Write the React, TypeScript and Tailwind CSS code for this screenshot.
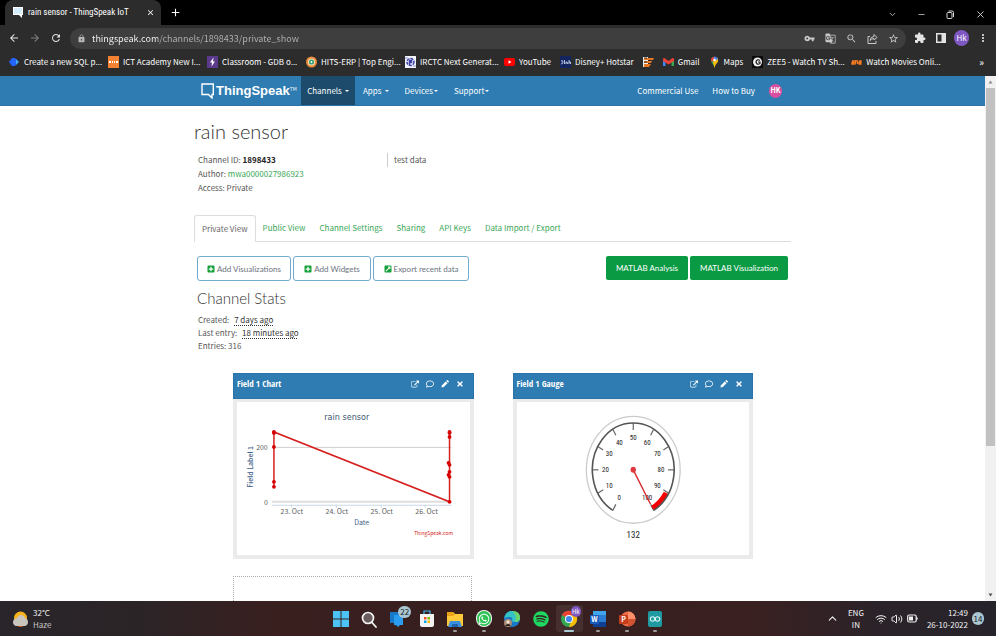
import React from "react";
import {
  MdVpnKey, MdGTranslate, MdZoomOut, MdStarBorder, MdExtension, MdMoreVert, MdLock, MdArrowBack,
  MdArrowForward, MdRefresh, MdAdd, MdClose,
} from "react-icons/md";
import { FaRegComment, FaPencilAlt, FaTimes, FaPlusSquare, FaExternalLinkSquareAlt, FaWhatsapp, FaSpotify } from "react-icons/fa";
import { ChevronDown, ChevronUp, Minus, Wifi, Volume2, X } from "lucide-react";

/* ---------- browser chrome ---------- */

function TabStrip() {
  return (
    <div className="flex h-[25px] items-end bg-black pl-[5px] text-white">
      <div className="flex h-[25px] w-[156px] items-center rounded-t-lg bg-[#2c2c2c] pr-[6px] pl-[8px]">
        <svg viewBox="0 0 10 11" className="h-[11px] w-[10px]" aria-hidden="true">
          <path d="M0 0h10v8H9v3L6 8H0z" fill="#fff" />
          <path d="M1 1h8v6H1z" fill="#d5ecfa" />
        </svg>
        <span className="ml-[5px] flex-1 font-['Roboto_Condensed','Noto_Sans_CJK_SC',sans-serif] text-[9px] whitespace-nowrap">rain sensor - ThingSpeak IoT</span>
        <button aria-label="Close tab" className="text-[9px]"><MdClose /></button>
      </div>
      <button aria-label="New tab" className="mb-[6px] ml-[8px] text-[13px]"><MdAdd /></button>
      <div className="ml-auto flex h-[22px] items-center gap-[20px] pr-[10px] text-[#d6d6d6]">
        <button aria-label="Search tabs"><ChevronDown size={9} strokeWidth={2} /></button>
        <button aria-label="Minimize"><Minus size={9} strokeWidth={2} /></button>
        <button aria-label="Restore">
          <svg viewBox="0 0 9 9" className="h-[9px] w-[9px]" fill="none" stroke="currentColor">
            <rect x="1" y="2.500" width="5" height="6" rx="1" />
            <path d="M2.500 1H6q1.500 0 1.500 1.500V7" />
          </svg>
        </button>
        <button aria-label="Close window"><X size={11} strokeWidth={2} /></button>
      </div>
    </div>
  );
}

function Toolbar() {
  return (
    <div className="flex h-[26px] items-center bg-[#2c2c2c] text-[12px] text-[#e3e3e3]">
      <div className="flex w-[70px] items-center gap-[9px] pl-[8px]">
        <button aria-label="Back"><MdArrowBack /></button>
        <button aria-label="Forward" className="text-[#808080]"><MdArrowForward /></button>
        <button aria-label="Reload"><MdRefresh /></button>
      </div>
      <div className="flex h-[21px] flex-1 items-center rounded-full bg-[#3e3e3e] pr-[2px] pl-[7px]">
        <MdLock className="text-[9px] text-[#b5b5b5]" />
        <input
          aria-label="Address"
          readOnly
          value="thingspeak.com/channels/1898433/private_show"
          className="ml-[6px] h-[18px] min-w-0 flex-1 bg-[linear-gradient(90deg,#ffffff_66px,#b4b4b4_66px)] bg-clip-text text-[9px] text-transparent outline-none"
        />
        <div className="grid grid-cols-[repeat(5,21px)] place-items-center text-[11px] text-[#c8c8c8]">
          <button aria-label="Passwords"><MdVpnKey /></button>
          <button aria-label="Translate"><MdGTranslate /></button>
          <button aria-label="Zoom"><MdZoomOut /></button>
          <button aria-label="Share">
            <svg viewBox="0 0 11 11" className="h-[11px] w-[11px]" fill="none" stroke="currentColor">
              <path d="M3 3.500H1v7h8V8" />
              <path d="M3 7.500Q3.500 3.500 7 3.500V1.500L10 4.500L7 7V5.500Q4.500 5.500 3 7.500z" />
            </svg>
          </button>
          <button aria-label="Bookmark"><MdStarBorder /></button>
        </div>
      </div>
      <div className="grid grid-cols-[repeat(4,21px)] place-items-center px-[3px]">
        <button aria-label="Extensions"><MdExtension /></button>
        <button aria-label="Side panel">
          <svg viewBox="0 0 10 10" className="h-[10px] w-[10px]">
            <path d="M0 0h10v10H0zM1.500 1.500v7h4v-7z" fill="currentColor" fillRule="evenodd" />
          </svg>
        </button>
        <button aria-label="Profile" className="flex h-[16px] w-[15px] items-center justify-center rounded-full bg-[#7e57c2] text-[8px] text-white">Hk</button>
        <button aria-label="Menu"><MdMoreVert /></button>
      </div>
    </div>
  );
}

const icon = "h-[12px] w-[11px] shrink-0";

const bookmarks: { label: string; wide: boolean; art: React.ReactNode }[] = [
  { label: "Create a new SQL p...", wide: true, art: <svg viewBox="0 0 11 12" className={icon}><path d="M3 2h3l3 4-3 4H3L0 6z" fill="#2563ff" /><path d="M7 3l3 3-3 3z" fill="#3fa9ff" /></svg> },
  { label: "ICT Academy New I...", wide: true, art: <svg viewBox="0 0 11 12" className={icon}><path d="M0 0h11v12H0z" fill="#f58233" /><path d="M1 5h2v2H1zM4 5h1v2H4zM6 5h1v2H6zM8 5h2v2H8z" fill="#fff" /></svg> },
  { label: "Classroom - GDB o...", wide: true, art: <svg viewBox="0 0 11 12" className={icon}><path d="M0 0h11v12H0z" fill="#5b3a8c" /><path d="M6.500 1.500L3 6.500h2L4.500 10.500L8 5.500H6z" fill="#fff" /></svg> },
  { label: "HITS-ERP | Top Engi...", wide: true, art: <svg viewBox="0 0 11 12" className={icon}><circle cx="5.500" cy="6" r="5.500" fill="#e98b3a" /><circle cx="5.500" cy="6" r="3.500" fill="#f2e2b8" /><circle cx="5.500" cy="6" r="2.500" fill="#2c9a6a" /><circle cx="5.500" cy="6" r="1" fill="#fff" /></svg> },
  { label: "IRCTC Next Generat...", wide: true, art: <svg viewBox="0 0 11 12" className={icon}><path d="M0 0h11v12H0z" fill="#f2f2fb" /><circle cx="5.500" cy="6" r="3.500" fill="none" stroke="#3b3fa5" strokeWidth="1.500" strokeDasharray="3 1" /><path d="M4 4h3v3H5v2H4zM0 2h3M8 10h3" fill="#3b3fa5" stroke="#3b3fa5" strokeWidth=".5" /></svg> },
  { label: "YouTube", wide: false, art: <svg viewBox="0 0 11 12" className={icon}><rect y="2" width="11" height="8" rx="2" fill="#f00" /><path d="M4.500 4.200v3.600L7.500 6z" fill="#fff" /></svg> },
  { label: "Disney+ Hotstar", wide: false, art: <svg viewBox="0 0 11 12" className={icon}><path d="M0 0h11v12H0z" fill="#13245e" /><path d="M1 5q2-1 2 1t-2 2M4.500 4v4M6 8V6q1.500-1 1.500 2M9 4v4M9 6h1.500v2" fill="none" stroke="#dfe8ff" strokeWidth=".8" /></svg> },
  { label: "", wide: false, art: <svg viewBox="0 0 11 12" className={icon}><path d="M0 1h5v10H0z" fill="#eee" /><path d="M1 2h10l-1 2H1zM1 5h8l-1 2H1zM1 8h7l-2 3H1z" fill="#e87722" /><path d="M1 2h3M1 6h3" stroke="#333" /></svg> },
  { label: "Gmail", wide: false, art: <svg viewBox="0 0 11 12" className={icon}><path d="M0 3h2.500v7H0z" fill="#4285f4" /><path d="M8.500 3H11v7H8.500z" fill="#34a853" /><path d="M0 2.500l1.500-.5 4 3 4-3 1.500.5V5L5.500 8.500 0 5z" fill="#ea4335" /></svg> },
  { label: "Maps", wide: false, art: <svg viewBox="0 0 11 12" className={icon}><path d="M5.500 12Q5 9 2.500 6.500Q1 3 4 1l4 4.500Q6 8 5.500 12z" fill="#34a853" /><path d="M5.500 12Q5.500 9 8.500 6.500Q10 3.500 8 1.500L4 6z" fill="#fbbc04" /><path d="M2 4Q2 1 5.500.5L7 2 3 6z" fill="#ea4335" /><path d="M5.500.5Q8 .5 9 3L7 4.500 4.500 2z" fill="#4285f4" /><circle cx="5.500" cy="4" r="1.300" fill="#fff" /></svg> },
  { label: "ZEE5 - Watch TV Sh...", wide: true, art: <svg viewBox="0 0 11 12" className={icon}><path d="M0 0h11v12H0z" fill="#0a0a0a" /><circle cx="5.500" cy="6" r="4.500" fill="#eee" /><path d="M8 4.500Q5 2.500 4 6q1 3.500 4 1.500V6H6" fill="none" stroke="#222" strokeWidth="1.200" /></svg> },
  { label: "Watch Movies Onli...", wide: true, art: <svg viewBox="0 0 11 12" className={icon}><path d="M1 5h2v3H1V6.500h2M4.500 4v4.500M5 5h1.500v3M8 5h2v3H8V6.500h2" fill="none" stroke="#f47a20" strokeWidth="1.300" /></svg> },
];

function BookmarkBar() {
  return (
    <div className="flex h-[25px] items-center bg-[#2c2c2c] pr-[12px] pb-[3px] pl-[9px] text-[8px] text-white">
      {bookmarks.map((b) => (
        <a key={b.label} href="#" aria-label={b.label || "Bookmark"} className={b.wide ? "flex w-[99px] shrink-0 items-center gap-[4px] whitespace-nowrap" : "mr-[9px] flex shrink-0 items-center gap-[4px] whitespace-nowrap"}>
          {b.art}
          {b.label && <span>{b.label}</span>}
        </a>
      ))}
      <button aria-label="More bookmarks" className="ml-auto text-[10px] leading-none">»</button>
    </div>
  );
}

/* ---------- ThingSpeak page ---------- */

function Caret() {
  return <svg viewBox="0 0 4 2" className="h-[2px] w-[4px] shrink-0" aria-hidden="true"><path d="M0 0h4L2 2z" fill="currentColor" /></svg>;
}

function NavBar() {
  return (
    <nav className="h-[30px] border-b border-[#2a72a3] bg-[#2e7cb1] text-[8px] text-white">
      <div className="mx-auto flex h-full w-[597px] items-center pr-[9px] pl-[7px]">
        <a href="#" className="flex w-[100px] items-center">
          <svg viewBox="0 0 13 16" className="h-[16px] w-[13px] shrink-0" fill="none" stroke="#fff" strokeWidth="1.400" aria-hidden="true">
            <path d="M1 1h11.300v10.500H11V15L7.500 11.500H1z" />
          </svg>
          <span className="ml-[2px] font-['Liberation_Sans',sans-serif] text-[13px] font-bold">ThingSpeak</span>
          <span className="mb-[5px] text-[5px] leading-none">TM</span>
        </a>
        <a href="#" className="flex h-full w-[54px] items-center justify-center gap-[3px] bg-[#1c4b6b]">Channels <Caret /></a>
        <a href="#" className="flex h-full items-center gap-[3px] px-[8px]">Apps <Caret /></a>
        <a href="#" className="flex h-full items-center gap-px px-[8px]">Devices <Caret /></a>
        <a href="#" className="flex h-full items-center gap-px px-[8px]">Support <Caret /></a>
        <a href="#" className="ml-auto">Commercial Use</a>
        <a href="#" className="ml-[14px]">How to Buy</a>
        <button aria-label="Account" className="ml-[14px] flex h-[14px] w-[13px] items-center justify-center rounded-full bg-[#d64fa0] text-[7px] font-bold">HK</button>
      </div>
    </nav>
  );
}

const tabs = ["Public View", "Channel Settings", "Sharing", "API Keys", "Data Import / Export"];

function PageTabs() {
  return (
    <div role="tablist" className="mt-[20px] flex h-[27px] border-b border-[#dddddd] text-[8px] text-[#3aa757]">
      <button role="tab" aria-selected="true" className="-mb-px rounded-t-[3px] border border-b-0 border-[#dddddd] bg-white px-[7px] text-[#666666]">Private View</button>
      {tabs.map((t) => (
        <button role="tab" aria-selected="false" key={t} className="px-[7px]">{t}</button>
      ))}
    </div>
  );
}

const outlineButton = "flex h-[25px] items-center justify-center gap-[2px] rounded-[3px] border border-[#75aacf] font-['Lato',sans-serif] text-[8px] text-[#6b7480]";

function Actions() {
  return (
    <div className="mt-[14px] flex items-start gap-[2px] pr-[3px] pl-[3px]">
      <button className={outlineButton + " w-[94px]"}><FaPlusSquare className="text-[#14a038]" />Add Visualizations</button>
      <button className={outlineButton + " w-[78px]"}><FaPlusSquare className="text-[#14a038]" />Add Widgets</button>
      <button className={outlineButton + " w-[96px]"}><FaExternalLinkSquareAlt className="text-[#14a038]" />Export recent data</button>
      <button className="ml-auto h-[24px] w-[82px] rounded-[2px] bg-[#0a9a44] font-['Lato',sans-serif] text-[8px] text-white">MATLAB Analysis</button>
      <button className="h-[24px] w-[98px] rounded-[2px] bg-[#0a9a44] font-['Lato',sans-serif] text-[8px] text-white">MATLAB Visualization</button>
    </div>
  );
}

function Card({ title, children }: { title: string; children: React.ReactNode }) {
  return (
    <section>
      <header className="flex h-[26px] items-center border border-[#2874a8] bg-[#2e7cb1] pr-[9px] pb-[4px] pl-[3px] text-white">
        <h2 className="font-['Open_Sans_Condensed','Noto_Sans_CJK_SC',sans-serif] text-[9px] font-bold">{title}</h2>
        <div className="ml-auto flex items-center gap-[7px] text-[8px]">
          <button aria-label="Open in new window">
            <svg viewBox="0 0 1792 1536" className="h-[8px] w-[8px]" fill="currentColor">
              <path d="M1408 928v320q0 119-84.500 203.500t-203.500 84.500h-832q-119 0-203.500-84.500t-84.500-203.500v-832q0-119 84.500-203.500t203.500-84.500h704q14 0 23 9t9 23v64q0 14-9 23t-23 9h-704q-66 0-113 47t-47 113v832q0 66 47 113t113 47h832q66 0 113-47t47-113v-320q0-14 9-23t23-9h64q14 0 23 9t9 23zM1792 64v512q0 26-19 45t-45 19-45-19l-176-176-652 652q-10 10-23 10t-23-10l-114-114q-10-10-10-23t10-23l652-652-176-176q-19-19-19-45t19-45 45-19h512q26 0 45 19t19 45z" />
            </svg>
          </button>
          <button aria-label="Comment"><FaRegComment /></button>
          <button aria-label="Edit">
            <svg viewBox="0 0 8 8" className="h-[8px] w-[8px]" fill="currentColor">
              <path d="M0.500 7.500L1 5.200 4.700 1.500 6.500 3.300 2.800 7z" />
              <path d="M5.200 1L6 .2q.4-.3.800 0l1 1q.3.400 0 .800L7 2.800z" />
            </svg>
          </button>
          <button aria-label="Remove"><FaTimes /></button>
        </div>
      </header>
      <div className="border-4 border-t-[3px] border-[#ebebeb] bg-white">{children}</div>
    </section>
  );
}

const dots: [number, number][] = [
  [37, 30], [37, 31], [37, 45], [37, 80], [37, 85],
  [213, 30], [213, 31], [213, 35], [212, 61], [213, 63], [213, 70], [212, 73], [213, 75], [213, 100],
];

function FieldChart() {
  return (
    <svg viewBox="0 0 233 153" className="block w-full" role="img" aria-label="Field 1 chart">
      <path d="M35 45.500H215" stroke="#d0d0d0" />
      <path d="M35 100H215" stroke="#dedede" strokeWidth="2" />
      <path d="M35 103.500H215M54.500 103v3M99.500 103v3M144.500 103v3M188.500 103v3" stroke="#c9d8e8" />
      <path d="M37 85V30L213 100V30" fill="none" stroke="#d62020" strokeWidth="1.500" />
      {dots.map(([x, y], i) => <circle key={i} cx={x} cy={y} r="1.900" fill="#d60000" />)}
      <g textAnchor="middle" className="text-[7px]" fill="#606060">
        <text x="110" y="18" className="font-['DejaVu_Sans_Condensed','DejaVu_Sans',sans-serif] text-[9px]" fill="#3e576f">rain sensor</text>
        <text x="25" y="48">200</text>
        <text x="29" y="103">0</text>
        <text x="55" y="112">23. Oct</text>
        <text x="100" y="112">24. Oct</text>
        <text x="145" y="112">25. Oct</text>
        <text x="190" y="112">26. Oct</text>
        <text x="125" y="123" fill="#3f6187">Date</text>
        <text transform="translate(16 65) rotate(-90)" className="font-medium" fill="#3f6187">Field Label 1</text>
        <text x="197" y="133" className="text-[5px]" fill="#d62020">ThingSpeak.com</text>
      </g>
    </svg>
  );
}

const CX = 116.5;
const CY = 68;

/* Point on the dial for a value from 0 to 100, at a fraction of the rim's radius. */
function dial(value: number, scale: number): [number, number] {
  const a = ((value * 3 - 150) * Math.PI) / 180;
  return [CX + Math.sin(a) * 41 * scale, CY - Math.cos(a) * 47 * scale];
}

function FieldGauge() {
  const marks = [0, 10, 20, 30, 40, 50, 60, 70, 80, 90, 100];
  const from = dial(0, 1);
  const to = dial(100, 1);
  const a = dial(90.5, 0.94);
  const b = dial(100, 0.94);
  const tip = dial(100, 0.84);
  return (
    <svg viewBox="0 0 233 153" className="block w-full" role="img" aria-label="Field 1 gauge">
      <ellipse cx={CX} cy={CY} rx="47" ry="53.500" fill="none" stroke="#cccccc" strokeWidth="1.300" />
      {marks.map((m) => {
        const p = dial(m, 1);
        const q = dial(m, 0.85);
        return <path key={m} d={`M${p[0]} ${p[1]}L${q[0]} ${q[1]}`} stroke="#666" strokeWidth="1.200" />;
      })}
      <path d={`M${a[0]} ${a[1]}A38.500 44 0 0 1 ${b[0]} ${b[1]}`} fill="none" stroke="#f40000" strokeWidth="5" />
      <path d={`M${from[0]} ${from[1]}A41 47 0 1 1 ${to[0]} ${to[1]}`} fill="none" stroke="#555" strokeWidth="1.600" />
      <g textAnchor="middle" className="font-['Roboto_Condensed','Roboto',sans-serif] text-[7px]" fill="#222">
        {marks.map((m) => {
          const p = dial(m, 0.68);
          return <text key={m} x={p[0]} y={p[1] + 2.5}>{m}</text>;
        })}
        <text x={CX} y="136" className="text-[9px]">132</text>
      </g>
      <path d={`M${CX} ${CY}L${tip[0]} ${tip[1]}`} stroke="#d62a2e" strokeWidth="1.400" />
      <ellipse cx={CX} cy={CY} rx="2.700" ry="3" fill="#e03a3e" />
    </svg>
  );
}

function ChannelPage() {
  return (
    <div className="flex min-h-0 flex-1 bg-white">
      <main className="min-w-0 flex-1 overflow-hidden text-[8px] text-[#555555]">
        <NavBar />
        <div className="mx-auto w-[597px]">
          <h1 className="pt-[13px] font-['Lato',sans-serif] text-[20px] leading-[24px] font-light text-[#333333]">rain sensor</h1>
          <div className="mt-[10px] flex items-start pl-[4px] leading-[14px]">
            <div className="w-[189px]">
              <p>Channel ID: <b className="text-[#222222]">1898433</b></p>
              <p>Author: <a href="#" className="text-[#3aa757]">mwa0000027986923</a></p>
              <p>Access: Private</p>
            </div>
            <p className="border-l border-[#cccccc] pl-[6px]">test data</p>
          </div>
          <PageTabs />
          <Actions />
          <h2 className="mt-[7px] pl-[3px] font-['Lato',sans-serif] text-[15px] leading-[20px] font-light text-[#333333]">Channel Stats</h2>
          <div className="mt-[5px] pl-[4px] leading-[13px]">
            <p>Created: <span className="ml-[3px] text-[#333333] underline decoration-dotted underline-offset-2">7 days ago</span></p>
            <p>Last entry: <span className="ml-[3px] text-[#333333] underline decoration-dotted underline-offset-2">18 minutes ago</span></p>
            <p>Entries: 316</p>
          </div>
          <div className="mt-[21px] grid grid-cols-2 gap-x-[39px] gap-y-[17px] pr-[38px] pl-[39px]">
            <Card title="Field 1 Chart"><FieldChart /></Card>
            <Card title="Field 1 Gauge"><FieldGauge /></Card>
            <div className="mr-[2px] h-[185px] border border-dotted border-[#aaaaaa]" />
          </div>
        </div>
      </main>
      <div className="flex w-[11px] flex-col items-center bg-[#f1f1f1] text-[#505050]" aria-hidden="true">
        <svg viewBox="0 0 11 12" className="h-[12px] w-[11px]"><path d="M3.500 7.500h4l-2-3z" fill="#8a8a8a" /></svg>
        <div className="h-[358px] w-[9px] bg-[#c1c1c1]" />
        <svg viewBox="0 0 11 12" className="mt-auto h-[12px] w-[11px]"><path d="M3.500 4.500h4l-2 3z" fill="currentColor" /></svg>
      </div>
    </div>
  );
}

/* ---------- Windows taskbar ---------- */

const big = "h-[20px] w-[18px]";

const apps: { name: string; state: string; art: React.ReactNode }[] = [
  { name: "Start", state: "", art: <svg viewBox="0 0 18 20" className={big}><path d="M1 2h7.500v7.500H1zM9.500 2H17v7.500H9.500zM1 10.500h7.500V18H1zM9.500 10.500H17V18H9.500z" fill="#4cc2f5" /></svg> },
  { name: "Search", state: "", art: <svg viewBox="0 0 18 20" className={big}><circle cx="8" cy="9" r="5.500" fill="#6b5d5d" stroke="#f4f4f4" strokeWidth="1.700" /><path d="M12 13.500l4 4.500" stroke="#f4f4f4" strokeWidth="1.800" strokeLinecap="round" /></svg> },
  { name: "Chat", state: "", art: <svg viewBox="0 0 18 20" className={big}><path d="M1 3h9v11H1z" fill="#1777c8" /><path d="M5 6h9v10h-3l-2 2-2-2H5z" fill="#2a9df0" /></svg> },
  { name: "Store", state: "", art: <svg viewBox="0 0 18 20" className={big}><path d="M6 5V2h6v3" fill="none" stroke="#3fb3ec" strokeWidth="1.200" /><path d="M2 5h14v11q0 2-2 2H4q-2 0-2-2z" fill="#f3f3f3" /><path d="M6 8h2.500v2.500H6z" fill="#f25022" /><path d="M9.500 8H12v2.500H9.500z" fill="#7fba00" /><path d="M6 11.500h2.500V14H6z" fill="#00a4ef" /><path d="M9.500 11.500H12V14H9.500z" fill="#ffb900" /></svg> },
  { name: "File Explorer", state: "open", art: <svg viewBox="0 0 18 20" className={big}><path d="M1 3h6l2 2h8v12H1z" fill="#ffca3a" /><path d="M1 3h6l2 2-2 2H1z" fill="#e8a317" /><path d="M4 12h10l2 6H2z" fill="#3b8fdd" /><path d="M6 15h6v3H6z" fill="#1d65ad" /></svg> },
  { name: "WhatsApp", state: "open", art: <span className="flex h-[17px] w-[16px] items-center justify-center rounded-full bg-[#f5f5f5]"><span className="flex h-[15px] w-[14px] items-center justify-center rounded-full bg-[#2fc355] text-[12px] text-white"><FaWhatsapp /></span></span> },
  { name: "Edge", state: "", art: <svg viewBox="0 0 18 20" className={big}><circle cx="9" cy="10" r="8" fill="#1b78c8" /><path d="M1.200 9Q3 2 9 2q8 0 8 7 0 4-5 4-3 0-3-2 1-3-2-3Q3 8 1.200 9z" fill="#35c3c8" /><path d="M9 2q8 0 8 7 0 4-5 4 3-6-3-11z" fill="#6bd66b" /><circle cx="5" cy="14" r="4" fill="#a98a72" /><circle cx="5" cy="13" r="1.700" fill="#f0e2d4" /><path d="M2 17q3-4 6 0z" fill="#222" /></svg> },
  { name: "Spotify", state: "", art: <span className="flex text-[16px] text-[#1ed760]"><FaSpotify /></span> },
  { name: "Chrome", state: "active", art: <svg viewBox="0 0 18 20" className={big}><circle cx="9" cy="10" r="8" fill="#34a853" /><path d="M2 6a8 8 0 0 1 14 0L9 10z" fill="#ea4335" /><path d="M16.300 6.500A8 8 0 0 1 9 18l3-8L9 6.500z" fill="#fbbc04" /><circle cx="9" cy="10" r="4" fill="#fff" /><circle cx="9" cy="10" r="3.100" fill="#4285f4" /></svg> },
  { name: "Word", state: "open", art: <svg viewBox="0 0 18 20" className={big}><rect x="4" y="2" width="13" height="16" rx="1" fill="#2b7cd3" /><path d="M4 2h13v4H4z" fill="#41a5ee" /><path d="M4 13h13v5H4z" fill="#103f91" /><rect x="1" y="6" width="9" height="9" rx="1" fill="#185abd" /><text x="5.500" y="13" textAnchor="middle" fill="#fff" className="text-[7px] font-bold">W</text></svg> },
  { name: "PowerPoint", state: "open", art: <svg viewBox="0 0 18 20" className={big}><circle cx="10" cy="10" r="7.500" fill="#ed6c47" /><path d="M10 2.500a7.500 7.500 0 0 1 7.500 7.500H10z" fill="#ff8f6b" /><path d="M10 17.500a7.500 7.500 0 0 0 7.500-7.500H10z" fill="#d35230" /><rect x="1" y="6" width="9" height="9" rx="1" fill="#c43e1c" /><text x="5.500" y="13" textAnchor="middle" fill="#fff" className="text-[7px] font-bold">P</text></svg> },
  { name: "Arduino", state: "open", art: <svg viewBox="0 0 18 20" className={big}><rect x="2" y="2" width="14" height="16" rx="2" fill="#1f9aa0" /><circle cx="6.500" cy="10" r="2.200" fill="none" stroke="#d9f4f4" strokeWidth="1.100" /><circle cx="11.500" cy="10" r="2.200" fill="none" stroke="#d9f4f4" strokeWidth="1.100" /></svg> },
];

function Taskbar() {
  return (
    <footer className="grid h-[35px] grid-cols-[1fr_343px_1fr] items-center bg-[linear-gradient(90deg,#29252a_0%,#2b2427_14%,#3a1f1f_28%,#371f1f_50%,#3a2020_75%,#2b2329_88%,#27232b_100%)] text-[8px] text-[#f2f2f2]">
      <div className="flex items-center gap-[5px] pl-[13px]">
        <svg viewBox="0 0 15 16" className="h-[16px] w-[15px]" aria-hidden="true">
          <circle cx="7.500" cy="7" r="6.500" fill="#f9b21b" />
          <path d="M3 15q-3-1-3-4 0-3 4-4 1-3 4-3t4 3q3 1 3 4t-3 4z" fill="#c9c5bd" />
          <path d="M4 15h7l-3.500 1z" fill="#e06a20" />
        </svg>
        <div className="leading-[12px]">
          <p>32°C</p>
          <p className="text-[#c9c5c5]">Haze</p>
        </div>
      </div>
      <div className="grid h-full grid-cols-12">
        {apps.map((a) => (
          <button key={a.name} aria-label={a.name} className={a.state === "active" ? "relative mx-px my-[4px] flex items-center justify-center rounded-[3px] bg-[#45302f]" : "relative flex items-center justify-center"}>
            {a.art}
            {a.name === "Chat" && <span className="absolute top-[5px] right-px flex h-[12px] w-[13px] items-center justify-center rounded-full bg-[#a9c6d2] text-[8px] text-[#222222]">22</span>}
            {a.name === "Chrome" && <span className="absolute top-px right-[2px] flex h-[11px] w-[10px] items-center justify-center rounded-full bg-[#7e57c2] text-[6px] text-white">Hk</span>}
            {a.state === "open" && <span className="absolute bottom-[4px] h-[2px] w-[4px] rounded-full bg-[#a09a9a]" />}
            {a.state === "active" && <span className="absolute bottom-0 h-[2px] w-[10px] rounded-full bg-[#a9cbd8]" />}
          </button>
        ))}
      </div>
      <div className="flex items-center justify-end pr-[12px]">
        <button aria-label="Hidden icons"><ChevronUp size={13} /></button>
        <p className="ml-[8px] w-[18px] text-center leading-[12px]">ENG IN</p>
        <div className="ml-[10px] flex items-center gap-[4px]">
          <Wifi size={12} />
          <Volume2 size={12} />
          <svg viewBox="0 0 11 9" className="h-[9px] w-[11px]" aria-hidden="true">
            <rect x=".7" y="1" width="8.500" height="7" rx="1.500" fill="none" stroke="#f2f2f2" strokeWidth="1.200" />
            <path d="M2 2.500h4v4H2zM9.500 3.500h1.200v2H9.500z" fill="#f2f2f2" />
          </svg>
        </div>
        <div className="ml-[9px] text-right leading-[12px]">
          <p>12:49</p>
          <p>26-10-2022</p>
        </div>
        <span className="ml-[4px] flex h-[13px] w-[12px] items-center justify-center rounded-full bg-[#a9c6d2] text-[8px] text-[#222222]">14</span>
      </div>
    </footer>
  );
}

export default function App() {
  return (
    <div className="flex h-screen flex-col overflow-hidden font-['Noto_Sans_CJK_SC',sans-serif]">
      <TabStrip />
      <Toolbar />
      <BookmarkBar />
      <ChannelPage />
      <Taskbar />
    </div>
  );
}
